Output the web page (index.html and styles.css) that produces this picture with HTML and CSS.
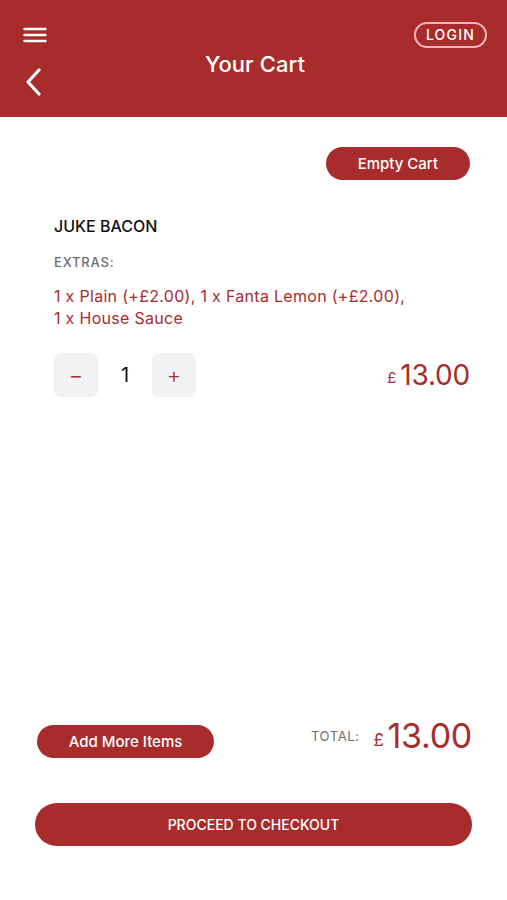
FILE: index.html
```html
<!DOCTYPE html>
<html lang="en">
<head>
  <meta charset="UTF-8">
  <title>Your Cart</title>
  <link rel="stylesheet" href="styles.css">
</head>
<body>

<header class="topbar">
  <div class="topbar-left">
    <svg class="menu-icon" width="24" height="16" viewBox="0 0 24 16">
      <path d="M1.5 2h21M1.5 8h21M1.5 14h21" stroke="#fff" stroke-width="2.4" stroke-linecap="round"/>
    </svg>
    <svg class="back-icon" width="18" height="28" viewBox="0 0 18 28">
      <path d="M14 2L3 14l11 12" fill="none" stroke="#fff" stroke-width="3.2" stroke-linecap="round" stroke-linejoin="round"/>
    </svg>
  </div>
  <h1 class="title">Your Cart</h1>
  <div class="topbar-right">
    <span class="login">LOGIN</span>
  </div>
</header>

<main class="cart">
  <div class="cart-actions">
    <button class="pill">Empty Cart</button>
  </div>

  <div class="item">
    <h2 class="item-name">JUKE BACON</h2>
    <div class="extras-label">EXTRAS:</div>
    <p class="extras">1 x Plain (+£2.00), 1 x Fanta Lemon (+£2.00),<br>1 x House Sauce</p>

    <div class="item-row">
      <div class="qty">
        <button class="qty-btn">&minus;</button>
        <span class="qty-value">1</span>
        <button class="qty-btn">+</button>
      </div>
      <div class="price"><span class="cur">£</span>13.00</div>
    </div>
  </div>
</main>

<footer class="cart-footer">
  <div class="total-row">
    <button class="pill pill-wide">Add More Items</button>
    <div class="total">
      <span class="total-label">TOTAL:</span>
      <span class="total-price"><span class="cur">£</span>13.00</span>
    </div>
  </div>
  <button class="checkout">PROCEED TO CHECKOUT</button>
</footer>

</body>
</html>
```

FILE: styles.css
```css
* { box-sizing: border-box; }

body {
  margin: 0;
  width: 507px;
  height: 900px;
  display: flex;
  flex-direction: column;
  background: #fff;
  font-family: 'Inter', 'Roboto', sans-serif;
  color: #111;
}

button {
  font-family: inherit;
  border: none;
  cursor: pointer;
}

.topbar {
  height: 117px;
  background: #a82c2c;
  display: grid;
  grid-template-columns: 1fr auto 1fr;
  padding: 22px 20px 0 23px;
  color: #fff;
}

.topbar-left {
  display: flex;
  flex-direction: column;
  align-items: flex-start;
}

.menu-icon { margin-top: 5px; }

.back-icon { margin: 25px 0 0 2px; }

.title {
  margin: 29px 0 0;
  font-size: 22px;
  font-weight: 500;
  letter-spacing: 0.1px;
}

.topbar-right {
  display: flex;
  justify-content: flex-end;
  align-items: flex-start;
}

.login {
  display: inline-block;
  height: 26px;
  line-height: 22px;
  padding: 0 10px;
  border: 2px solid #f0b8b4;
  border-radius: 13px;
  font-size: 14px;
  font-weight: 500;
  letter-spacing: 1.2px;
}

.cart {
  flex: 1;
  padding: 30px 37px 0 54px;
}

.cart-actions {
  display: flex;
  justify-content: flex-end;
}

.pill {
  height: 33px;
  padding: 0 32px;
  border-radius: 17px;
  background: #a82c2c;
  color: #fff;
  font-size: 15px;
  font-weight: 500;
}

.item-name {
  margin: 36px 0 0;
  font-size: 16px;
  font-weight: 500;
  line-height: 20px;
}

.extras-label {
  margin-top: 18px;
  font-size: 13px;
  color: #6b6e78;
  letter-spacing: 0.8px;
  line-height: 16px;
  font-weight: 500;
}

.extras {
  margin: 15px 0 0;
  color: #a82c2c;
  font-size: 16px;
  line-height: 22px;
  letter-spacing: 0.3px;
}

.item-row {
  display: flex;
  justify-content: space-between;
  align-items: center;
  margin-top: 24px;
}

.qty {
  display: flex;
  align-items: center;
}

.qty-btn {
  width: 44px;
  height: 44px;
  border-radius: 7px;
  background: #f2f2f4;
  color: #a82c2c;
  font-size: 22px;
  font-weight: 300;
  padding: 0;
}

.qty-value {
  width: 54px;
  text-align: center;
  font-size: 20px;
}

.price {
  color: #a82c2c;
  font-size: 28px;
  letter-spacing: -0.2px;
}

.cur {
  font-size: 15px;
  margin-right: 4px;
  vertical-align: 2px;
}

.cart-footer {
  padding: 0 35px 54px;
}

.total-row {
  display: flex;
  justify-content: space-between;
  align-items: flex-start;
  padding: 0 0 0 2px;
}

.pill-wide {
  width: 177px;
  padding: 0;
  margin-top: 10px;
}

.total {
  display: flex;
  align-items: center;
}

.total-label {
  font-size: 13px;
  color: #6b6e78;
  letter-spacing: 0.6px;
  margin-right: 14px;
}

.total-price {
  color: #a82c2c;
  font-size: 34px;
  letter-spacing: -0.3px;
}

.total-price .cur {
  font-size: 17px;
}

.checkout {
  display: block;
  width: 100%;
  height: 43px;
  margin-top: 45px;
  border-radius: 22px;
  background: #a82c2c;
  color: #fff;
  font-size: 14px;
  font-weight: 500;
}
```
